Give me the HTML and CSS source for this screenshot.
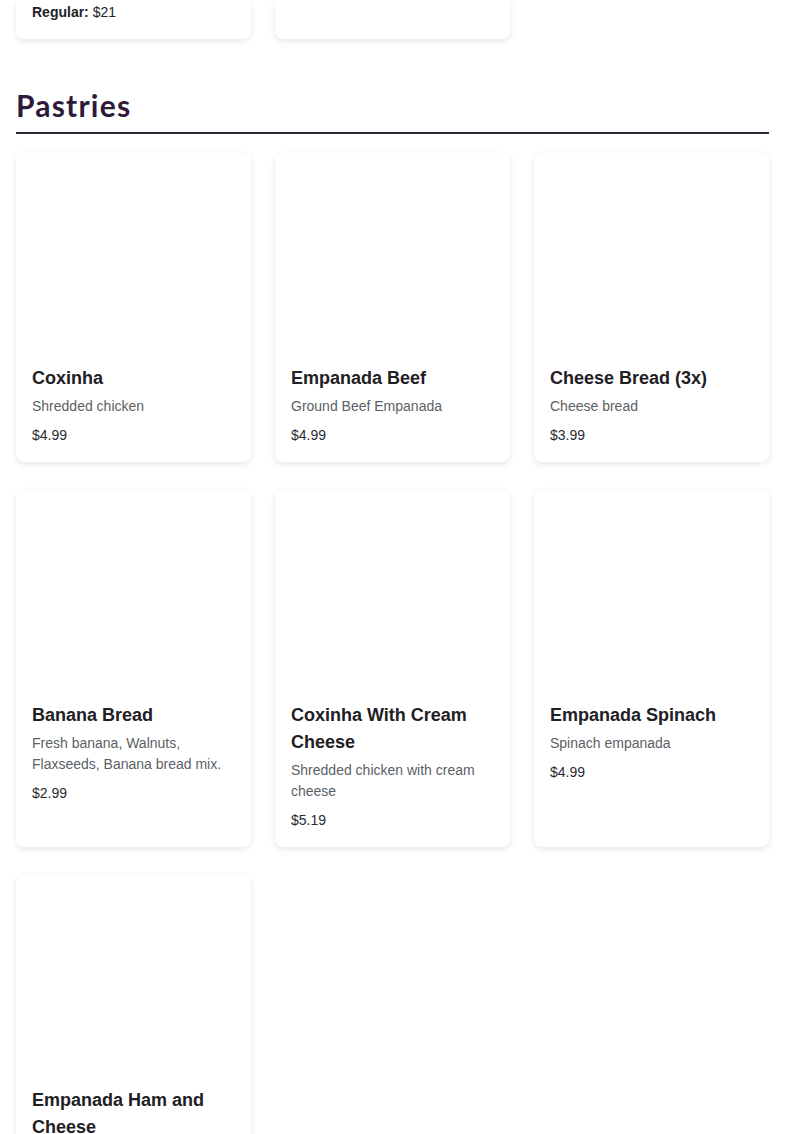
FILE: index.html
```html
<!DOCTYPE html>
<html lang="en">
<head>
<meta charset="utf-8">
<title>Menu - Pastries</title>
<link rel="stylesheet" href="styles.css">
</head>
<body>
<main class="menu">
  <section class="section section-prev">
    <div class="grid">
      <article class="card card-partial">
        <div class="card-body">
          <p class="size"><strong>Regular:</strong> $21</p>
        </div>
      </article>
      <article class="card card-partial">
        <div class="card-body"></div>
      </article>
    </div>
  </section>

  <section class="section">
    <h2 class="section-title">Pastries</h2>
    <div class="grid">
      <article class="card">
        <div class="card-image"></div>
        <div class="card-body">
          <h3 class="item-name">Coxinha</h3>
          <p class="item-desc">Shredded chicken</p>
          <p class="item-price">$4.99</p>
        </div>
      </article>
      <article class="card">
        <div class="card-image"></div>
        <div class="card-body">
          <h3 class="item-name">Empanada Beef</h3>
          <p class="item-desc">Ground Beef Empanada</p>
          <p class="item-price">$4.99</p>
        </div>
      </article>
      <article class="card">
        <div class="card-image"></div>
        <div class="card-body">
          <h3 class="item-name">Cheese Bread (3x)</h3>
          <p class="item-desc">Cheese bread</p>
          <p class="item-price">$3.99</p>
        </div>
      </article>
      <article class="card">
        <div class="card-image"></div>
        <div class="card-body">
          <h3 class="item-name">Banana Bread</h3>
          <p class="item-desc">Fresh banana, Walnuts, Flaxseeds, Banana bread mix.</p>
          <p class="item-price">$2.99</p>
        </div>
      </article>
      <article class="card">
        <div class="card-image"></div>
        <div class="card-body">
          <h3 class="item-name">Coxinha With Cream Cheese</h3>
          <p class="item-desc">Shredded chicken with cream cheese</p>
          <p class="item-price">$5.19</p>
        </div>
      </article>
      <article class="card">
        <div class="card-image"></div>
        <div class="card-body">
          <h3 class="item-name">Empanada Spinach</h3>
          <p class="item-desc">Spinach empanada</p>
          <p class="item-price">$4.99</p>
        </div>
      </article>
      <article class="card">
        <div class="card-image"></div>
        <div class="card-body">
          <h3 class="item-name">Empanada Ham and Cheese</h3>
          <p class="item-desc">Ham and cheese empanada</p>
          <p class="item-price">$4.99</p>
        </div>
      </article>
    </div>
  </section>
</main>
</body>
</html>
```

FILE: styles.css
```css
* {
  box-sizing: border-box;
}

html, body {
  margin: 0;
  padding: 0;
  background: #ffffff;
}

body {
  font-family: "Liberation Sans", Arial, sans-serif;
  color: #222327;
}

.menu {
  padding: 0 16px;
}

.grid {
  display: grid;
  grid-template-columns: repeat(3, 1fr);
  gap: 28px 24px;
  align-items: stretch;
}

.card {
  background: #ffffff;
  border-radius: 8px;
  box-shadow: 0 2px 6px rgba(0, 0, 0, 0.1);
}

.card-image {
  height: 196px;
}

.card-body {
  padding: 16px;
  display: flex;
  flex-direction: column;
}

.card-partial {
  border-top-left-radius: 0;
  border-top-right-radius: 0;
  min-height: 38.5px;
}

.card-partial .card-body {
  padding-top: 1.5px;
}

.size {
  margin: 0;
  font-size: 14px;
  line-height: 21px;
  color: #222327;
}

.size strong {
  font-weight: 700;
}

.section-prev {
  margin-bottom: 48px;
}

.section-title {
  margin: 0 0 19.5px;
  padding-bottom: 9px;
  font-family: Lato, "Noto Sans", sans-serif;
  font-weight: 700;
  font-size: 30px;
  line-height: 36px;
  letter-spacing: 1.2px;
  color: #2e1a3b;
  border-bottom: 2px solid #2d2431;
}

.item-name {
  margin: 0;
  font-size: 18px;
  line-height: 27px;
  font-weight: 700;
  color: #1f2024;
}

.item-desc {
  margin: 4px 0 0;
  font-size: 14px;
  line-height: 21px;
  color: #5b5f66;
}

.item-price {
  margin: 8px 0 0;
  font-size: 14px;
  line-height: 21px;
  color: #2a2b2f;
}
```
